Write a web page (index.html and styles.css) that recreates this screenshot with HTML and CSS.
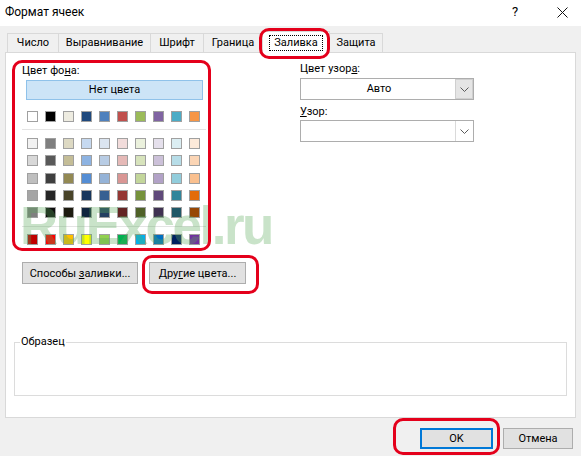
FILE: index.html
```html
<!DOCTYPE html>
<html lang="ru">
<head>
<meta charset="utf-8">
<title>Формат ячеек</title>
<link rel="stylesheet" href="styles.css">
</head>
<body>
<div class="window">
  <div class="titlebar">
    <span class="title">Формат ячеек</span>
    <span class="tb-help">?</span>
    <span class="tb-close"><svg width="11" height="11" viewBox="0 0 11 11"><path d="M0.5 0.5 L10.5 10.5 M10.5 0.5 L0.5 10.5" stroke="#111" stroke-width="1" fill="none"/></svg></span>
  </div>

  <div class="tabs">
    <div class="tab t1">Число</div>
    <div class="tab t2">Выравнивание</div>
    <div class="tab t3">Шрифт</div>
    <div class="tab t4">Граница</div>
    <div class="tab t5 active"><span class="focus">Заливка</span></div>
    <div class="tab t6">Защита</div>
  </div>

  <div class="panel">
    <div class="fill-top">
      <div class="bg-col">
        <div class="label">Цвет фо<u>н</u>а:</div>
        <div class="nocolor">Нет цвета</div>
        <div class="swatches first">
          <span class="sw" style="background:#FFFFFF"></span>
          <span class="sw" style="background:#000000"></span>
          <span class="sw" style="background:#EEECE1"></span>
          <span class="sw" style="background:#1F497D"></span>
          <span class="sw" style="background:#4F81BD"></span>
          <span class="sw" style="background:#C0504D"></span>
          <span class="sw" style="background:#9BBB59"></span>
          <span class="sw" style="background:#8064A2"></span>
          <span class="sw" style="background:#4BACC6"></span>
          <span class="sw" style="background:#F79646"></span>
        </div>
        <div class="sep"></div>
        <div class="swatches grid">
          <span class="sw" style="background:#F2F2F2"></span>
          <span class="sw" style="background:#7F7F7F"></span>
          <span class="sw" style="background:#DDD9C3"></span>
          <span class="sw" style="background:#C6D9F0"></span>
          <span class="sw" style="background:#DBE5F1"></span>
          <span class="sw" style="background:#F2DCDB"></span>
          <span class="sw" style="background:#EBF1DD"></span>
          <span class="sw" style="background:#E5E0EC"></span>
          <span class="sw" style="background:#DBEEF3"></span>
          <span class="sw" style="background:#FDEADA"></span>

          <span class="sw" style="background:#D8D8D8"></span>
          <span class="sw" style="background:#595959"></span>
          <span class="sw" style="background:#C4BD97"></span>
          <span class="sw" style="background:#8DB3E2"></span>
          <span class="sw" style="background:#B8CCE4"></span>
          <span class="sw" style="background:#E5B9B7"></span>
          <span class="sw" style="background:#D7E3BC"></span>
          <span class="sw" style="background:#CCC1D9"></span>
          <span class="sw" style="background:#B7DDE8"></span>
          <span class="sw" style="background:#FBD5B5"></span>

          <span class="sw" style="background:#BFBFBF"></span>
          <span class="sw" style="background:#3F3F3F"></span>
          <span class="sw" style="background:#938953"></span>
          <span class="sw" style="background:#548DD4"></span>
          <span class="sw" style="background:#95B3D7"></span>
          <span class="sw" style="background:#D99694"></span>
          <span class="sw" style="background:#C3D69B"></span>
          <span class="sw" style="background:#B2A2C7"></span>
          <span class="sw" style="background:#92CDDC"></span>
          <span class="sw" style="background:#FAC08F"></span>

          <span class="sw" style="background:#A5A5A5"></span>
          <span class="sw" style="background:#262626"></span>
          <span class="sw" style="background:#494429"></span>
          <span class="sw" style="background:#17365D"></span>
          <span class="sw" style="background:#366092"></span>
          <span class="sw" style="background:#953734"></span>
          <span class="sw" style="background:#76923C"></span>
          <span class="sw" style="background:#5F497A"></span>
          <span class="sw" style="background:#31859B"></span>
          <span class="sw" style="background:#E36C09"></span>

          <span class="sw" style="background:#7F7F7F"></span>
          <span class="sw" style="background:#0C0C0C"></span>
          <span class="sw" style="background:#1D1B10"></span>
          <span class="sw" style="background:#0F243E"></span>
          <span class="sw" style="background:#244061"></span>
          <span class="sw" style="background:#632423"></span>
          <span class="sw" style="background:#4F6128"></span>
          <span class="sw" style="background:#3F3151"></span>
          <span class="sw" style="background:#205867"></span>
          <span class="sw" style="background:#974806"></span>
        </div>
        <div class="sep sep2"></div>
        <div class="swatches std">
          <span class="sw" style="background:#C00000"></span>
          <span class="sw" style="background:#FF0000"></span>
          <span class="sw" style="background:#FFC000"></span>
          <span class="sw" style="background:#FFFF00"></span>
          <span class="sw" style="background:#92D050"></span>
          <span class="sw" style="background:#00B050"></span>
          <span class="sw" style="background:#00B0F0"></span>
          <span class="sw" style="background:#0070C0"></span>
          <span class="sw" style="background:#002060"></span>
          <span class="sw" style="background:#7030A0"></span>
        </div>
      </div>

      <div class="pattern-col">
        <div class="label">Цвет узор<u>а</u>:</div>
        <div class="combo">
          <span class="combo-val">Авто</span>
          <span class="combo-btn gray"><svg width="9" height="5" viewBox="0 0 9 5"><path d="M0.5 0.5 L4.5 4.5 L8.5 0.5" stroke="#5a5a5a" stroke-width="1" fill="none"/></svg></span>
        </div>
        <div class="label l2"><u>У</u>зор:</div>
        <div class="combo">
          <span class="combo-val"></span>
          <span class="combo-btn"><svg width="9" height="5" viewBox="0 0 9 5"><path d="M0.5 0.5 L4.5 4.5 L8.5 0.5" stroke="#5a5a5a" stroke-width="1" fill="none"/></svg></span>
        </div>
      </div>
    </div>

    <div class="btn-row">
      <div class="btn b-fill"><span>Способы <u>з</u>аливки...</span></div>
      <div class="btn b-more"><span>Дру<u>г</u>ие цвета...</span></div>
    </div>

    <fieldset class="sample">
      <legend>Образец</legend>
    </fieldset>
  </div>

  <div class="footer">
    <div class="btn b-ok"><span>OK</span></div>
    <div class="btn b-cancel"><span>Отмена</span></div>
  </div>

  <div class="watermark">RuExcel.ru</div>

  <div class="mark m-tab"></div>
  <div class="mark m-colors"></div>
  <div class="mark m-more"></div>
  <div class="mark m-ok"></div>
</div>
</body>
</html>
```

FILE: styles.css
```css
* { box-sizing: border-box; }

body {
  margin: 0;
  background: #f0f0f0;
  font-family: Roboto, "Noto Sans", sans-serif;
  font-size: 11px;
  color: #000;
}

.window {
  position: relative;
  width: 581px;
  height: 456px;
  overflow: hidden;
  background: #f0f0f0;
}

/* title bar */
.titlebar {
  height: 26px;
  background: #fff;
  display: flex;
  align-items: center;
  padding-bottom: 2px;
  line-height: 16px;
}
.title {
  margin-left: 5px;
  font-size: 12px;
  flex: 1;
}
.tb-help {
  width: 30px;
  text-align: center;
  font-size: 13px;
  margin-right: 15px;
  flex-shrink: 0;
}
.tb-close {
  width: 34px;
  margin-right: 2px;
  display: flex;
  justify-content: center;
  flex-shrink: 0;
}

/* tabs */
.tabs {
  margin-top: 7px;
  margin-left: 7px;
  height: 20px;
  display: flex;
  align-items: flex-start;
  position: relative;
  z-index: 2;
}
.tab {
  height: 19px;
  line-height: 18px;
  text-align: center;
  border: 1px solid #d9d9d9;
  border-bottom: none;
  background: #f0f0f0;
  margin-right: -1px;
  flex-shrink: 0;
}
.t1 { width: 52px; }
.t2 { width: 93px; }
.t3 { width: 54px; }
.t4 { width: 60px; }
.t5 { width: 68px; }
.t6 { width: 54px; }
.tab.active {
  background: #fff;
  height: 22px;
  margin-top: -2px;
  padding-top: 3px;
  line-height: 15px;
  position: relative;
  z-index: 3;
}
.focus {
  display: inline-block;
  outline: 1px dotted #000;
  padding: 0 4px;
  line-height: 14px;
}

/* panel */
.panel {
  margin-top: -1px;
  margin-left: 5px;
  width: 571px;
  height: 366px;
  background: #fff;
  border: 1px solid #d9d9d9;
  position: relative;
  z-index: 1;
}
.fill-top {
  display: flex;
}
.bg-col {
  width: 200px;
  padding-left: 16px;
  padding-top: 10px;
  flex-shrink: 0;
}
.label {
  line-height: 15px;
}
.nocolor {
  margin-top: 2px;
  margin-left: 4px;
  width: 177px;
  height: 20px;
  background: #cce4f7;
  border: 1px solid #8fc2ea;
  text-align: center;
  line-height: 18px;
}
.swatches {
  display: grid;
  grid-template-columns: repeat(10, 11px);
  column-gap: 7px;
  margin-left: 5px;
}
.swatches.first { margin-top: 11px; }
.swatches.grid {
  margin-top: 8px;
  row-gap: 6.25px;
}
.swatches.std { margin-top: 7px; }
.sw {
  width: 11px;
  height: 11px;
  border: 1px solid #a0a0a0;
  display: block;
}
.sep {
  margin-top: 7px;
  height: 1px;
  width: 184px;
  background: #e3e3e3;
}
.sep2 { margin-top: 8px; }

.pattern-col {
  margin-left: 94px;
  padding-top: 8px;
  width: 174px;
  flex-shrink: 0;
}
.combo {
  margin-top: 2px;
  height: 22px;
  border: 1px solid #adadad;
  display: flex;
  background: #fff;
}
.combo-val {
  flex: 1;
  text-align: center;
  line-height: 20px;
  padding-left: 2px;
}
.combo-btn {
  width: 18px;
  display: flex;
  align-items: center;
  justify-content: center;
  border-left: 1px solid #dadada;
  background: #fff;
}
.combo-btn.gray {
  background: #e5e5e5;
  border: 1px solid #cfcfcf;
}
.label.l2 { margin-top: 4px; }
.label.l2 + .combo { margin-top: 1px; }

/* buttons */
.btn-row {
  display: flex;
  gap: 11px;
  margin-top: 17px;
  margin-left: 16px;
}
.btn {
  height: 22px;
  border: 1px solid #adadad;
  background: #e1e1e1;
  display: flex;
  align-items: center;
  justify-content: center;
  white-space: pre;
}
.b-fill { width: 116px; }
.b-more { width: 97px; }

.sample {
  margin: 51px 0 0 8px;
  width: 546px;
  height: 59px;
  padding: 0 0 0 5px;
  border: 1px solid #dcdcdc;
  box-sizing: content-box;
  min-width: 0;
}
.sample legend {
  padding: 0 1px;
  line-height: 14px;
}

/* footer */
.footer {
  display: flex;
  justify-content: flex-end;
  gap: 10px;
  margin-top: 10px;
  padding-right: 8px;
}
.b-ok {
  width: 73px;
  height: 21px;
  border: 1px solid #0078d7;
  box-shadow: inset 0 0 0 1px #0078d7;
}
.b-cancel {
  width: 70px;
  height: 21px;
}

/* watermark overlay */
.watermark {
  position: absolute;
  left: 20px;
  top: 200px;
  font-family: "Liberation Sans", sans-serif;
  font-weight: bold;
  font-size: 53px;
  line-height: 52px;
  letter-spacing: -2.5px;
  color: rgba(90, 170, 90, 0.33);
  z-index: 5;
  pointer-events: none;
}

/* red annotations */
.mark {
  position: absolute;
  border: 3px solid #e4001b;
  border-radius: 10px;
  z-index: 6;
}
.m-tab { left: 259px; top: 28px; width: 71px; height: 31px; }
.m-colors { left: 12px; top: 60px; width: 199px; height: 191px; }
.m-more { left: 142px; top: 255px; width: 117px; height: 39px; }
.m-ok { left: 393px; top: 418px; width: 107px; height: 37px; }
```
